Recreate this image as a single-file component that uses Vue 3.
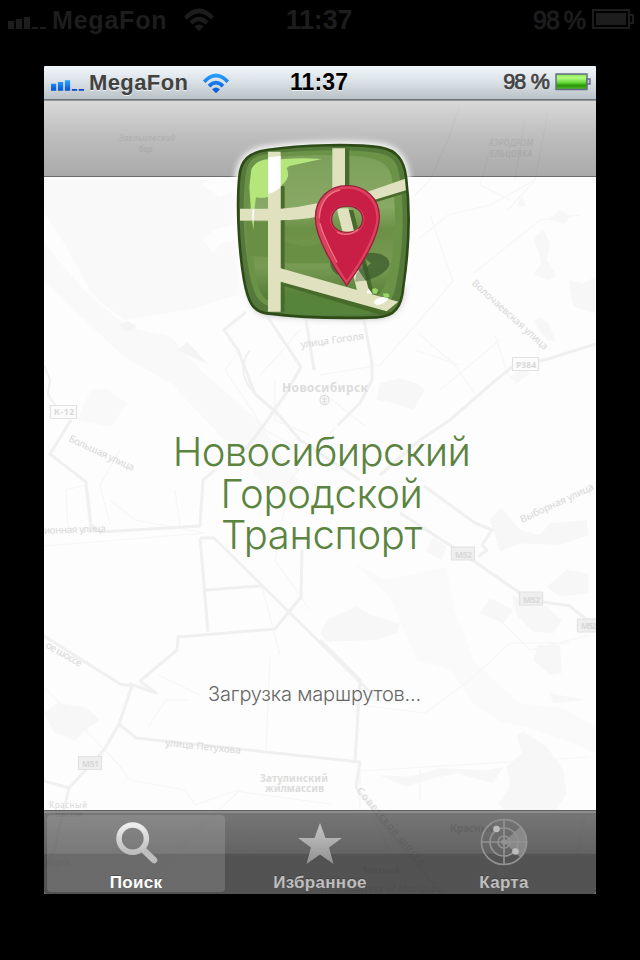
<script setup>
const titleLines = [
  { text: 'Новосибирский', name: 'first' },
  { text: 'Городской', name: 'second' },
  { text: 'Транспорт', name: 'third' },
]
const tabs = [
  { label: 'Поиск', icon: 'search', active: true },
  { label: 'Избранное', icon: 'star', active: false },
  { label: 'Карта', icon: 'radar', active: false },
]
</script>

<template>
  <div class="device">
    <header class="status outer">
      <div class="carrier">
        <svg class="signal" viewBox="0 0 38 12"><path d="M0 4h6v8H0zM8 2h6v10H8zM16 0h6v12h-6zM24 10h6v2h-6zM32 10h6v2h-6z" /></svg>
        <span class="operator">MegaFon</span>
        <svg class="wifi" viewBox="0 0 32 24">
          <path d="M1 8.500Q16-7.500 31 8.500L28 11.500Q16-1 4 11.500ZM6.500 13.500Q16 4 25.500 13.500L22.500 16.500Q16 10 9.500 16.500ZM11.500 18.500Q16 14.500 20.500 18.500L16 23Z" />
        </svg>
      </div>
      <span class="clock">11:37</span>
      <div class="power">
        <span class="percent">98 %</span>
        <svg class="battery" viewBox="0 0 42 20">
          <path fill="none" stroke="#1d1d1d" stroke-width="2" d="M1 1h36v18H1zM37 6h4v8h-4" /><path d="M4 4h30v12H4z" />
        </svg>
      </div>
    </header>

    <section class="screen">
      <svg class="map" viewBox="44 66 552 828" aria-hidden="true">
        <rect x="44" y="66" width="552" height="828" fill="#fdfdfd" />
        <!-- land use and water -->
        <g transform="translate(44 180) scale(.33333)" fill="#f9f9f9">
          <path d="M0 0H580L600 340L430 390L240 420L150 350L60 190L0 100ZM0 190L120 330L250 440L380 470L470 570L640 720L800 960H700L560 800L380 610L240 530L100 400L0 300ZM400 510L430 487L495 555Z" />
          <path fill="#fdfdfd" d="M470 15L500 0H560L575 30L530 50ZM475 180L510 150L585 130V180L530 190L510 220Z" />
          <path fill="#f4f4f4" d="M225 435L250 423L280 440L250 455ZM400 510L430 487L495 555Z" />
          <path d="M100 720L140 630L185 625L250 670L200 740Z" />
        </g>
        <g transform="translate(320 180) scale(.33333)" fill="#f7f7f7">
          <path d="M170 660L180 610L240 595L290 610L315 630L280 690L225 670ZM590 80L605 50L620 78ZM640 175L670 150L690 190L680 240L708 285L690 300L640 285L665 245ZM680 120L720 90L750 110L735 130ZM745 300L790 310L825 290V400L760 380ZM640 425L660 410L685 430L710 485L680 480ZM570 590L610 565L630 580L590 610Z" />
        </g>
        <g transform="translate(320 420) scale(.33333)" fill="#f7f7f7">
          <path d="M510 300L545 262L575 300L600 330L660 345L690 310L800 300L805 345L720 375L600 370L540 395ZM320 395L340 350L380 380L365 420ZM680 500L740 450L805 460V520L720 530ZM575 525L680 560L725 600L700 640L640 635L590 585ZM0 640L20 600L110 560L150 585L240 610L230 640L170 660L20 665ZM480 580L510 535L580 570L550 610Z" />
          <path fill="#fafafa" d="M100 430L200 480L380 440L400 560L460 720H290L210 530Z" />
        </g>
        <g transform="translate(320 640) scale(.33333)" fill="#f7f7f7">
          <path fill="#fafafa" d="M295 0L290 60L390 90L460 190L540 245L620 260L760 310L825 340V260L730 205L600 190L500 100L460 60L420 0Z" />
          <path d="M640 60L655 15L720 15L725 100L690 105ZM590 285L610 275L680 320L730 390L740 460L700 520H560L535 490L570 440L560 380L605 340ZM690 160L800 180L700 190ZM175 405L270 410L360 385L500 390L550 380L520 430L410 400L320 420L260 440Z" />
        </g>
        <path fill="#f7f7f7" d="M44 713L58 703L85 707L100 720L85 730L75 741L62 735L54 732Z" />

        <!-- thin streets -->
        <g fill="none" stroke="#f6f6f6" stroke-width="1.200">
          <path d="M419 239L448 215L490 205L535 180M430 215L453 281L420 320L380 365M418 333L455 365L475 395M474 273L540 220L580 215M508 210L535 180M510 200L480 185L490 150M380 365L320 375M415 350L460 365M495 335L508 375M440 390L500 340M515 180L525 120M535 180L548 112M460 105L448 140L430 180L395 216" />
          <path d="M44 546L205 533L135 520L110 500M68 530L66 490L85 485L90 530M110 525L100 485L120 450M180 525L175 490M262 587L280 655M270 655L266 750M158 675L200 695M148 727L166 700L188 700M44 687L119 765L130 780L185 790L195 805L235 791L330 804M360 771L590 757M360 772L360 810M420 770V800M490 610L530 650L590 635M320 700L425 713L470 680L510 643L570 643M145 880L240 790M370 810L410 894M570 894L586 810" />
          <path d="M320 390L365 426M335 428L290 480L275 560L310 610M300 330L274 360L260 375M275 380V420L310 435M240 350L225 370L265 430L300 450" />
        </g>
        <!-- main roads -->
        <g fill="none" stroke="#f0f0f0" stroke-width="3" stroke-linejoin="round">
          <path d="M246 312L224 330L238 350L255 394L278 414L300 440L330 460L360 480M265 313L301 367L285 395L264 425L245 450M306 320L314 370M364 320L372 363L372 380L360 403L338 425" />
          <path d="M596 344L548 359L512 367L490 385L450 420L420 440L380 475" />
          <path d="M71 420L50 454L86 482L91 525L100 532L200 526L202 495L203 480L215 470M200 538H214L375 697M200 538L208 632M205 590L261 586M302 550L301 597L275 629L178 637L177 650L140 681L156 693L130 684L132 686" />
          <path d="M424 486L475 523L492 530L482 545L487 550L478 557M400 513L462 553L530 600L570 606L577 612L590 622L600 634" />
          <path d="M44 636L120 684L132 686L119 724L136 738L360 762L356 787L380 820L442 894M355 762L360 680L320 640M119 724L104 750L69 788L44 781M69 788L54 850L44 870" />
          <path d="M44 365L50 380L48 394L58 410M250 350C235 370 245 390 275 410" stroke-width="2" />
        </g>

        <g class="map-labels">
          <text x="301" y="348" transform="rotate(-8 301 348)" textLength="64">улица Гоголя</text>
          <text x="471" y="284" transform="rotate(42 471 284)" textLength="99">Волочаевская улица</text>
          <text x="522" y="523" transform="rotate(-25 522 523)" textLength="80">Выборная улица</text>
          <text x="68" y="441" transform="rotate(25 68 441)" textLength="71">Большая улица</text>
          <text x="44" y="534" transform="rotate(-2 44 534)" textLength="62">ионная улица</text>
          <text x="45" y="647" transform="rotate(30 45 647)" textLength="40">ое шоссе</text>
          <text x="165" y="746" transform="rotate(6 165 746)" textLength="76">улица Петухова</text>
          <text x="356" y="791" transform="rotate(49 356 791)" textLength="100">Советское шоссе</text>
          <text x="282" y="392" textLength="86" font-weight="700" font-size="12">Новосибирск</text>
          <text x="260" y="782" textLength="68" font-weight="700">Затулинский</text>
          <text x="265" y="792" textLength="59" font-weight="700">жилмассив</text>
          <text x="49" y="808" textLength="38" font-size="8">Красный</text>
          <text x="55" y="817" textLength="28" font-size="8">Восток</text>
          <text x="46" y="866" textLength="24" font-size="8">Марта</text>
          <text x="450" y="832" textLength="46" font-weight="700">Красный</text>
          <text x="362" y="873" textLength="38" font-weight="700" font-size="8">Элитный</text>
          <text x="320" y="892" textLength="124" font-size="8">Tiles courtesy of MapQuest</text>
          <g font-style="italic" font-size="8" class="faint"><text x="119" y="141" textLength="56">Заельцовский</text><text x="139" y="152">бор</text><text x="489" y="146" textLength="44">АЭРОДРОМ</text><text x="490" y="157" textLength="42">ЕЛЬЦОВКА</text></g>
        </g>
        <g class="route-signs">
          <path class="light" d="M50.500 405.500h26v13h-26zM512.500 357.500h26v13h-26z" />
          <path d="M451.500 547h23v13h-23zM519.500 592h23v13h-23zM577.500 619h23v13h-23zM78.500 756.500h23v13h-23z" />
          <g class="sign-text"><text x="54" y="415" textLength="20">К-12</text><text x="516" y="367.500" textLength="20">Р384</text><text x="455" y="557.500" textLength="17">М52</text><text x="523" y="602.500" textLength="17">М52</text><text x="581" y="629" textLength="15">М52</text><text x="82" y="767" textLength="17">М51</text></g>
        </g>
        <g fill="none" stroke="#dedede" stroke-width="1.300"><circle cx="324.500" cy="400" r="4.500" /><path d="M324.500 397v6M321.800 398.500l5.400 3M321.800 401.500l5.400-3" /></g>
      </svg>

      <div class="status inner">
        <div class="carrier">
          <svg class="signal" viewBox="0 0 38 12">
            <defs><linearGradient id="blue" x2="0" y2="1"><stop stop-color="#2aa5ff" /><stop offset="1" stop-color="#0650d8" /></linearGradient></defs>
            <path fill="url(#blue)" d="M0 4h6v8H0zM8 2h6v10H8zM16 0h6v12h-6z" /><path fill="#0b46d1" d="M24 10h6v2h-6zM32 10h6v2h-6z" />
          </svg>
          <span class="operator">MegaFon</span>
          <svg class="wifi" viewBox="0 0 32 24">
            <path fill="url(#blue)" d="M1 8.500Q16-7.500 31 8.500L28 11.500Q16-1 4 11.500ZM6.500 13.500Q16 4 25.500 13.500L22.500 16.500Q16 10 9.500 16.500ZM11.500 18.500Q16 14.500 20.500 18.500L16 23Z" />
          </svg>
        </div>
        <span class="clock">11:37</span>
        <div class="power">
          <span class="percent">98 %</span>
          <svg class="battery" viewBox="0 0 36 18">
            <defs><linearGradient id="charge" x2="0" y2="1"><stop stop-color="#85e64e" /><stop offset=".25" stop-color="#b5fb81" /><stop offset=".55" stop-color="#65d83a" /><stop offset=".75" stop-color="#279507" /><stop offset="1" stop-color="#54bd29" /></linearGradient></defs>
            <path fill="url(#charge)" stroke="#646985" stroke-width="1.400" d="M1 1h31v15.500H1z" /><path fill="#c7ced9" stroke="#646985" stroke-width="1.400" d="M32 6h3v5h-3z" />
          </svg>
        </div>
      </div>

      <div class="navbar"></div>

      <main class="splash">
        <svg class="logo" viewBox="0 0 630 600">
          <defs>
            <linearGradient id="grass" x2="0" y2="1"><stop stop-color="#7ca059" /><stop offset=".35" stop-color="#88a965" /><stop offset=".5" stop-color="#6a9045" /><stop offset=".75" stop-color="#789b54" /><stop offset="1" stop-color="#4f7a31" /></linearGradient>
            <clipPath id="tile"><path d="M140 60C250 43 410 42 480 52C532 60 552 92 558 140C572 250 568 350 550 470C545 530 525 560 470 562C350 566 220 560 140 550C100 545 85 520 72 450C55 350 50 220 58 140C62 90 88 67 140 60Z" /></clipPath>
          </defs>
          <path class="logo-halo" d="M140 60C250 43 410 42 480 52C532 60 552 92 558 140C572 250 568 350 550 470C545 530 525 560 470 562C350 566 220 560 140 550C100 545 85 520 72 450C55 350 50 220 58 140C62 90 88 67 140 60Z" />
          <path class="logo-shadow" d="M80 470C95 545 110 550 150 556C250 566 350 570 470 566C530 560 548 530 555 470Z" />
          <g clip-path="url(#tile)">
            <path fill="#54793a" d="M40 30H590V580H40Z" />
            <path fill="#6b9348" d="M135 73C260 57 400 58 470 68C520 75 536 100 540 150C555 260 548 360 530 455C520 515 500 535 455 540C350 545 230 540 155 530C110 523 98 480 88 430C70 330 66 230 76 145C80 95 95 80 135 73Z" />
            <path fill="url(#grass)" d="M145 85C260 72 390 72 450 85C500 95 515 120 520 170C530 280 525 370 500 450C490 490 460 515 415 520H190C130 520 115 490 108 440C90 330 90 230 96 160C98 115 110 92 145 85Z" />
            <path fill="#688f43" d="M78 275H145V380L85 378ZM195 332Q260 365 320 330L350 400H195Z" />
            <path fill="#56843a" d="M195 485Q330 510 500 540L430 555H195Z" />
            <path fill="#b4e67b" d="M94 118Q108 90 145 88V200Q125 206 108 202L103 240L101 300L94 260L88 170ZM182 88Q250 82 305 87L208 108L200 115Q215 145 182 168Z" />
            <path fill="#466b2b" d="M60 255L145 252L292 248V258L182 273H60ZM375 55H388V180L375 190ZM430 212L560 175V188L440 225ZM182 168H194V545H182ZM182 455L520 549L500 560L182 465ZM385 240L400 240L460 485L445 490Z" />
            <path fill="#e0e1be" d="M144 65H182V545H144ZM60 236H144V272H60ZM182 236Q240 232 292 220V260Q240 270 182 271ZM337 55H375V190H337ZM430 190L560 145V180L440 217ZM182 415L535 515L500 544L182 455ZM350 235H385L450 495L412 485Z" />
            <path fill="#fff" d="M144 82L182 78V170Q170 184 144 192ZM445 475L458 493L440 490ZM465 510Q487 495 506 505Q490 526 470 525L460 518ZM97 238H103L101 272H97Z" />
            <path fill="#9ad667" d="M456 478Q466 470 475 480L469 492L458 490ZM488 491Q510 486 508 500L494 505Z" />
            <path fill="#31562b" fill-opacity=".35" d="M410 430L440 400L450 450L405 455Z" />
            <path fill="#3c5c2c" fill-opacity=".75" fill-rule="evenodd" d="M330 395Q330 427 365 440L415 420L437 452Q480 440 498 421Q519 403 499 382Q474 364 440 370L400 400ZM434 385L453 400L436 414Z" />
            <path fill="#db425d" stroke="#9c1d3e" stroke-width="4" fill-rule="evenodd" d="M381 167C325 167 286 208 286 264C286 324 345 420 380 466C417 418 478 322 478 260C478 205 436 167 381 167ZM380 228C408 228 428 243 428 268C428 292 408 307 382 307C356 307 335 293 335 269C335 243 355 228 380 228Z" />
            <path fill="#c91f47" fill-rule="evenodd" d="M385 176C337 174 301 213 299 266C300 312 350 409 380 451C412 405 470 316 469 262C468 208 427 177 385 176ZM379 224C407 224 433 240 433 266C433 294 410 314 382 314C354 314 330 294 330 268C330 243 353 224 379 224Z" />
            <path fill="none" stroke="#ed7580" stroke-width="4" d="M298 265C299 220 322 188 360 180M351 306Q382 324 415 297M300 280Q309 318 351 397" />
          </g>
          <path fill="none" stroke="#2d4b17" stroke-width="8" d="M140 60C250 43 410 42 480 52C532 60 552 92 558 140C572 250 568 350 550 470C545 530 525 560 470 562C350 566 220 560 140 550C100 545 85 520 72 450C55 350 50 220 58 140C62 90 88 67 140 60Z" />
        </svg>
        <h1 class="title"><span v-for="line in titleLines" :key="line.name" :class="line.name">{{ line.text }}</span></h1>
        <p class="loading">Загрузка маршрутов...</p>
      </main>

      <nav class="tabs">
        <div v-for="tab in tabs" :key="tab.icon" class="tab" :class="{ active: tab.active }">
          <svg v-if="tab.icon === 'search'" class="tab-icon" viewBox="0 0 52 52">
            <defs><linearGradient id="silver" x2="0" y2="1"><stop stop-color="#eee" /><stop offset="1" stop-color="#bebebe" /></linearGradient></defs>
            <path fill="none" stroke="#bebebe" stroke-width="6.500" stroke-linecap="round" d="M33 31.500L44 42" /><circle cx="22.700" cy="20.600" r="13.700" fill="none" stroke="url(#silver)" stroke-width="5.500" />
          </svg>
          <svg v-else-if="tab.icon === 'star'" class="tab-icon" viewBox="0 0 52 52">
            <defs><linearGradient id="gray" x2="0" y2="1"><stop stop-color="#c6c6c6" /><stop offset="1" stop-color="#929292" /></linearGradient></defs>
            <path fill="url(#gray)" d="M26 5L31.500 20H48L35 29.500L39.500 46L26 36.500L12.500 46L17 29.500L4 20H20.500Z" />
          </svg>
          <svg v-else class="tab-icon" viewBox="0 0 52 52">
            <path fill="#919191" fill-opacity=".8" d="M26 24L43 8A23 23 0 0 1 43 40Z" />
            <g fill="none" stroke="#929292" stroke-width="1.700"><circle cx="26" cy="24" r="22.500" /><circle cx="26" cy="24" r="14" /><circle cx="26" cy="24" r="6" /><circle cx="26" cy="24" r="2" /><path d="M26 1.500V46.500M3.500 24H48.500" /></g>
            <circle cx="18.500" cy="11" r="3.300" fill="#bcbcbc" /><circle cx="37.500" cy="33.500" r="3.300" fill="#bcbcbc" />
          </svg>
          <span class="tab-label">{{ tab.label }}</span>
        </div>
      </nav>
    </section>
  </div>
</template>

<style>
body { background: #000; }
</style>

<style scoped>
.device { box-sizing: border-box; width: 640px; height: 960px; background: #000; overflow: hidden; font-family: "Liberation Sans", Arial, sans-serif; }
.status { display: grid; grid-template-columns: 1fr auto 1fr; align-items: center; box-sizing: border-box; white-space: pre; }
.carrier, .power { display: flex; align-items: center; }
.power { justify-content: flex-end; }
.operator, .clock { font-weight: 700; }
.status svg { display: block; flex: none; }
.outer { height: 40px; margin-bottom: 26px; padding: 0 6px 0 8px; color: #1d1d1d; fill: #1d1d1d; }
.outer .signal { width: 38px; height: 12px; margin-top: 6px; }
.outer .operator { margin-left: 6px; font-size: 25px; letter-spacing: .8px; }
.outer .wifi { width: 32px; height: 24px; margin-left: 16px; }
.outer .clock { margin-right: 4px; font-size: 27px; letter-spacing: -.2px; }
.outer .percent { font-size: 25px; letter-spacing: -1px; word-spacing: -1px; -webkit-text-stroke: .9px #1d1d1d; }
.outer .battery { width: 42px; height: 20px; margin-left: 7px; margin-top: -2px; }
.screen { position: relative; display: flex; flex-direction: column; width: 552px; height: 828px; margin: 0 auto; overflow: hidden; border-radius: 2px; background: #fdfdfd; isolation: isolate; }
.map { position: absolute; inset: 0; width: 552px; height: 828px; z-index: -1; }
.map-labels { font: 500 10px "Noto Sans", sans-serif; fill: #dcdcdc; }
.map-labels .faint { fill: #ececec; }
.route-signs path { fill: #efefef; stroke: #e2e2e2; stroke-width: 1.2; }
.route-signs .light { fill: #fcfcfc; }
.sign-text { font: 700 8.5px "Noto Sans", sans-serif; fill: #d8d8d8; }
.inner { height: 34px; padding: 0 5px 0 7px; border-bottom: 1px solid #6c7478; background: linear-gradient(#f0f5f9, #dce3e8 45%, #b9c2c8); text-shadow: 0 1px 0 rgba(255, 255, 255, .7); }
.inner .signal { width: 33px; height: 11px; margin-top: 5px; }
.inner .operator { margin-left: 5px; color: #424242; font-size: 22px; letter-spacing: .4px; }
.inner .wifi { width: 28px; height: 21px; margin-left: 14px; margin-top: 1px; }
.inner .clock { margin-right: 4px; color: #000; font-size: 23px; letter-spacing: .1px; }
.inner .percent { color: #424242; font-size: 21.500px; letter-spacing: -.8px; -webkit-text-stroke: .7px #424242; }
.inner .battery { width: 36px; height: 18px; margin-left: 6px; margin-top: -1px; }
.navbar { box-sizing: border-box; height: 77px; border-top: 1px solid rgba(0, 0, 0, .12); border-bottom: 1px solid rgba(0, 0, 0, .5); background: linear-gradient(rgba(0, 0, 0, .14), rgba(0, 0, 0, .26) 50%, rgba(0, 0, 0, .33)); }
.splash { display: flex; flex: 1; flex-direction: column; align-items: center; min-height: 0; }
.logo { display: block; flex: none; width: 210px; height: 200px; margin-top: -47px; margin-right: -10px; overflow: visible; }
.logo-halo { fill: #fff; stroke: #fff; stroke-width: 22px; filter: blur(9px); }
.logo-shadow { fill: rgba(0, 0, 0, .25); filter: blur(9px); }
.title { display: flex; flex-direction: column; align-items: center; margin: 101px 0 0; padding-left: 3px; color: #5b8440; font: 300 40px/41.500px Inter, "Liberation Sans", sans-serif; }
.title span { display: block; letter-spacing: -.35px; }
.title .first { letter-spacing: -.65px; }
.loading { margin: 126px 0 0; padding-right: 11px; color: #666; font: 300 20px/24px Inter, "Liberation Sans", sans-serif; letter-spacing: -.2px; }
.tabs { display: grid; grid-template-columns: repeat(3, 1fr); gap: 6px; box-sizing: border-box; height: 84px; padding: 4px 3px 2px; border-top: 1px solid #606060; box-shadow: inset 0 2px rgba(255, 255, 255, .18); background: linear-gradient(rgba(36, 36, 36, .62), rgba(48, 48, 48, .75) 51%, rgba(50, 50, 50, .84) 52%); }
.tab { display: flex; flex-direction: column; align-items: center; box-sizing: border-box; height: 77px; border-radius: 4px; color: #bebebe; }
.tab.active { background: rgba(255, 255, 255, .14); color: #fff; }
.tab-icon { display: block; flex: none; width: 52px; height: 52px; margin-top: 3px; }
.tab-label { margin-top: 3px; font: 700 17px/20px "Liberation Sans", sans-serif; letter-spacing: .3px; text-shadow: 0 -1px rgba(0, 0, 0, .25); }
</style>
